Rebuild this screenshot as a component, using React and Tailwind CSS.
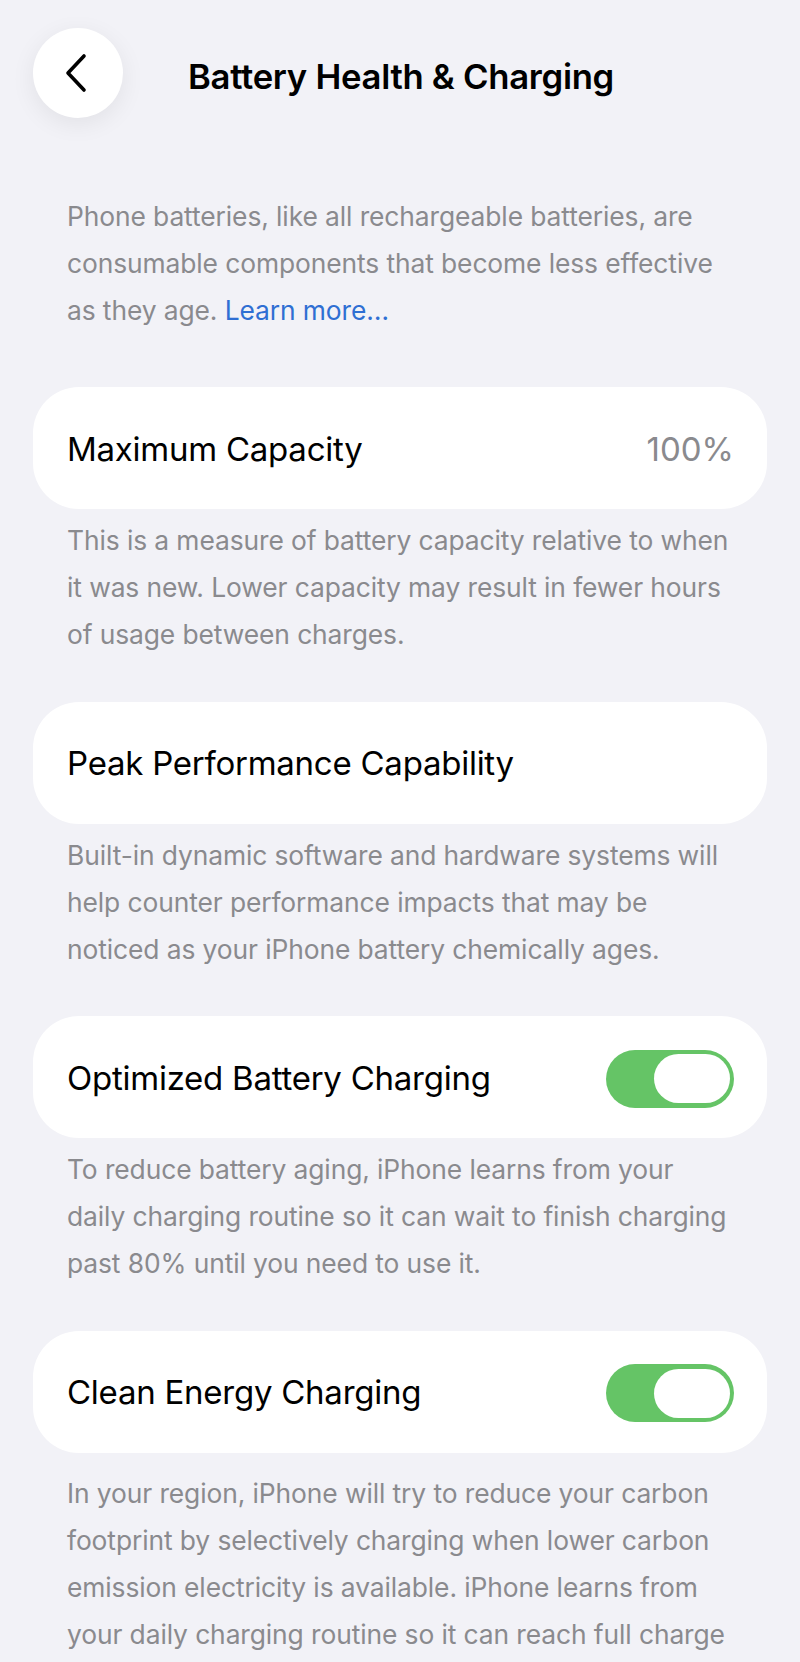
import React from "react";

const font = { fontFamily: "Inter, 'Noto Sans', sans-serif" };

function Toggle() {
  return (
    <div className="flex h-[58px] w-[128px] shrink-0 items-center justify-end rounded-full bg-[#65c466] pr-[4px]">
      <div className="h-[49px] w-[76px] rounded-full bg-white" />
    </div>
  );
}

function Card({ label, right }) {
  return (
    <div className="flex h-[122px] items-center justify-between rounded-[46px] bg-white pl-[34px] pr-[33px] pt-[3px]">
      <span className="text-[33px] tracking-[-0.25px] text-black">{label}</span>
      {right}
    </div>
  );
}

function Footer({ lines, className = "" }) {
  return (
    <div className={"px-[67px] text-[26.4px] leading-[47px] text-[#8a8a8e] tracking-[-0.1px] " + className}>
      {lines.map((l, i) => (
        <div key={i} className="whitespace-nowrap">{l}</div>
      ))}
    </div>
  );
}

export default function App() {
  return (
    <div className="h-[1662px] w-[800px] overflow-hidden bg-[#f2f2f7]" style={font}>
      <div className="flex items-center pl-[33px] pt-[28px]">
        <div className="flex h-[90px] w-[90px] items-center justify-center rounded-full bg-white shadow-[0_6px_24px_rgba(0,0,0,0.07)]">
          <svg width="30" height="40" viewBox="0 0 30 40" fill="none">
            <path d="M21 3 L5 20 L21 37" stroke="#000" strokeWidth="3.6" strokeLinecap="round" strokeLinejoin="round" />
          </svg>
        </div>
        <div className="ml-[65px] pt-[6px] text-[34.7px] font-semibold tracking-[-0.3px] text-black">
          Battery Health &amp; Charging
        </div>
      </div>

      <Footer
        className="mt-[75px]"
        lines={[
          "Phone batteries, like all rechargeable batteries, are",
          "consumable components that become less effective",
          <span key="x">
            as they age. <span className="text-[#2f6fd3]">Learn more…</span>
          </span>,
        ]}
      />

      <div className="mt-[53px] px-[33px]">
        <Card label="Maximum Capacity" right={<span className="text-[33px] text-[#8a8a8e]">100%</span>} />
      </div>
      <Footer
        className="mt-[8px]"
        lines={[
          "This is a measure of battery capacity relative to when",
          "it was new. Lower capacity may result in fewer hours",
          "of usage between charges.",
        ]}
      />

      <div className="mt-[43.5px] px-[33px]">
        <Card label="Peak Performance Capability" />
      </div>
      <Footer
        className="mt-[8px]"
        lines={[
          "Built-in dynamic software and hardware systems will",
          "help counter performance impacts that may be",
          "noticed as your iPhone battery chemically ages.",
        ]}
      />

      <div className="mt-[43.5px] px-[33px]">
        <Card label="Optimized Battery Charging" right={<Toggle />} />
      </div>
      <Footer
        className="mt-[8px]"
        lines={[
          "To reduce battery aging, iPhone learns from your",
          "daily charging routine so it can wait to finish charging",
          "past 80% until you need to use it.",
        ]}
      />

      <div className="mt-[43.5px] px-[33px]">
        <Card label="Clean Energy Charging" right={<Toggle />} />
      </div>
      <Footer
        className="mt-[17px]"
        lines={[
          "In your region, iPhone will try to reduce your carbon",
          "footprint by selectively charging when lower carbon",
          "emission electricity is available. iPhone learns from",
          "your daily charging routine so it can reach full charge",
        ]}
      />
    </div>
  );
}
